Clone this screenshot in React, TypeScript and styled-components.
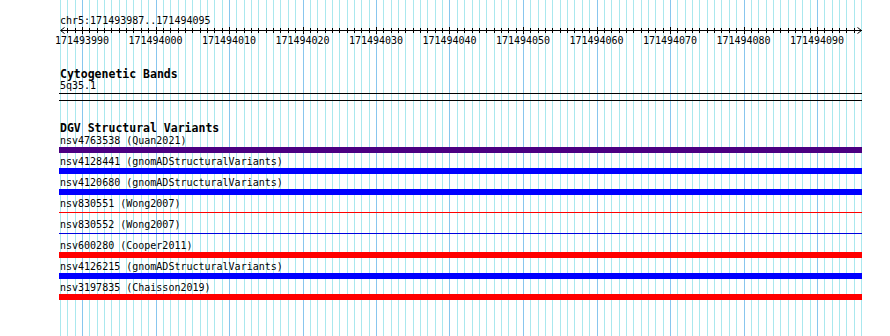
import React from "react";
import styled, { createGlobalStyle } from "styled-components";

const GlobalStyle = createGlobalStyle`
  html, body { margin: 0; padding: 0; background: #ffffff; }
`;

const START = 171493987;
const BASES = 110;
const X0 = 59.95;
const PPB = 7.35;
const LEFT = 59;
const xAt = (k: number) => Math.round(X0 + k * PPB);

type Variant = { name: string; source: string; color: string; thin?: boolean };

const variants: Variant[] = [
  { name: "nsv4763538", source: "Quan2021", color: "#4b0082" },
  { name: "nsv4128441", source: "gnomADStructuralVariants", color: "#0000ff" },
  { name: "nsv4120680", source: "gnomADStructuralVariants", color: "#0000ff" },
  { name: "nsv830551", source: "Wong2007", color: "#ff0000", thin: true },
  { name: "nsv830552", source: "Wong2007", color: "#0000e0", thin: true },
  { name: "nsv600280", source: "Cooper2011", color: "#ff0000" },
  { name: "nsv4126215", source: "gnomADStructuralVariants", color: "#0000ff" },
  { name: "nsv3197835", source: "Chaisson2019", color: "#ff0000" },
];

const Page = styled.div`
  position: relative;
  width: 890px;
  height: 336px;
  overflow: hidden;
  background: #ffffff;
  color: #000000;
  font-family: "DejaVu Sans Mono", "Liberation Mono", monospace;
`;

const Guides = styled.svg`
  position: absolute;
  left: 0;
  top: 0;
  z-index: 0;
`;

const Content = styled.div`
  position: relative;
  z-index: 1;
  display: flex;
  flex-direction: column;
  margin-left: ${LEFT}px;
  width: 803px;
  padding-top: 15px;
`;

const Position = styled.div`
  font-size: 10px;
  line-height: 11px;
  height: 11px;
  padding-left: 1px;
  white-space: nowrap;
`;

const RulerSvg = styled.svg`
  display: block;
`;

const ScaleLabels = styled.div`
  display: flex;
  margin-top: 1px;
  margin-left: -13.75px;
  height: 12px;
`;

const ScaleLabel = styled.span`
  flex: 0 0 73.5px;
  text-align: center;
  font-size: 10px;
  line-height: 12px;
  white-space: nowrap;
`;

const TrackTitle = styled.div`
  margin-top: 21px;
  font-size: 11.5px;
  font-weight: bold;
  line-height: 12px;
  height: 12px;
  padding-left: 1px;
  white-space: nowrap;
`;

const ItemLabel = styled.div`
  font-size: 10px;
  line-height: 12px;
  height: 12px;
  padding-left: 1px;
  white-space: nowrap;
`;

const BandBox = styled.div`
  box-sizing: border-box;
  margin-top: 1px;
  height: 8px;
  border-top: 1px solid #000;
  border-bottom: 1px solid #000;
`;

const VariantRow = styled.div`
  display: flex;
  flex-direction: column;
  height: 21px;
`;

const VariantLabel = styled.div`
  font-size: 10px;
  line-height: 13px;
  height: 13px;
  padding-left: 1px;
  white-space: nowrap;
`;

const BarArea = styled.div`
  height: 6px;
  display: flex;
  flex-direction: column;
  justify-content: flex-start;
`;

const Bar = styled.div<{ $color: string; $thin?: boolean }>`
  background: ${(p) => p.$color};
  height: ${(p) => (p.$thin ? "1px" : "6px")};
  margin-top: ${(p) => (p.$thin ? "2px" : "0")};
`;

function Guidelines() {
  const lines = [];
  for (let k = 0; k < BASES; k++) {
    const x = xAt(k) + 0.5;
    const major = (START + k) % 10 === 0;
    lines.push(
      <line
        key={k}
        x1={x}
        x2={x}
        y1={0}
        y2={336}
        stroke={major ? "#88c6ee" : "#aae8ee"}
        strokeWidth={1}
      />
    );
  }
  return (
    <Guides width={890} height={336} shapeRendering="crispEdges">
      {lines}
    </Guides>
  );
}

function Ruler() {
  const ticks = [];
  for (let k = 1; k < BASES - 1; k++) {
    const x = xAt(k) - LEFT + 0.5;
    const major = (START + k) % 10 === 0;
    ticks.push(
      <line key={k} x1={x} x2={x} y1={major ? 1 : 2} y2={major ? 8 : 7} stroke="#000" />
    );
  }
  const left = xAt(0) - LEFT + 0.5;
  const right = xAt(BASES - 1) - LEFT + 0.5;
  return (
    <RulerSvg width={803} height={8} shapeRendering="crispEdges">
      <line x1={left} x2={right} y1={4.5} y2={4.5} stroke="#000" />
      {ticks}
      <polyline points={`${left + 4},1.5 ${left},4.5 ${left + 4},7.5`} fill="none" stroke="#000" shapeRendering="auto" />
      <polyline points={`${right - 4},1.5 ${right},4.5 ${right - 4},7.5`} fill="none" stroke="#000" shapeRendering="auto" />
    </RulerSvg>
  );
}

export default function App() {
  const labels = [];
  for (let v = 171493990; v <= 171494090; v += 10) labels.push(v);
  return (
    <Page>
      <GlobalStyle />
      <Guidelines />
      <Content>
        <Position>chr5:171493987..171494095</Position>
        <Ruler />
        <ScaleLabels>
          {labels.map((l) => (
            <ScaleLabel key={l}>{l}</ScaleLabel>
          ))}
        </ScaleLabels>
        <TrackTitle>Cytogenetic Bands</TrackTitle>
        <ItemLabel>5q35.1</ItemLabel>
        <BandBox />
        <TrackTitle>DGV Structural Variants</TrackTitle>
        {variants.map((v) => (
          <VariantRow key={v.name}>
            <VariantLabel>
              {v.name} ({v.source})
            </VariantLabel>
            <BarArea>
              <Bar $color={v.color} $thin={v.thin} />
            </BarArea>
          </VariantRow>
        ))}
      </Content>
    </Page>
  );
}
